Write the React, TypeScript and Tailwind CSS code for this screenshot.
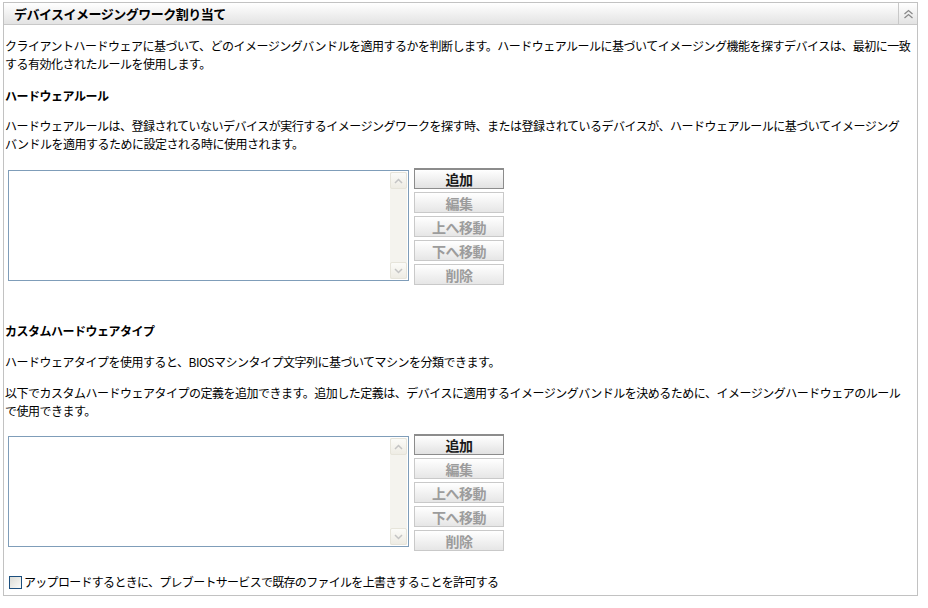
import React from "react";

const FONT = { fontFamily: "'Noto Sans CJK JP', 'Noto Sans', sans-serif" };

function ListBox() {
  return (
    <div className="mt-[2px] flex h-[111px] w-[401px] border border-[#7f9db9] bg-white">
      <div className="flex-1" />
      <div className="my-[1px] mr-[1px] flex w-[17px] flex-col bg-[#f4f3ee]">
        <div className="flex h-[17px] items-center justify-center rounded-[2px] border border-[#e6e4da] bg-linear-to-b from-[#fbfbf8] to-[#eeece4]">
          <svg width="9" height="6" viewBox="0 0 9 6">
            <polyline points="1,5 4.5,1.5 8,5" fill="none" stroke="#c4c4c4" strokeWidth="1.5" />
          </svg>
        </div>
        <div className="flex-1" />
        <div className="flex h-[17px] items-center justify-center rounded-[2px] border border-[#e6e4da] bg-linear-to-b from-[#fbfbf8] to-[#eeece4]">
          <svg width="9" height="6" viewBox="0 0 9 6">
            <polyline points="1,1 4.5,4.5 8,1" fill="none" stroke="#c4c4c4" strokeWidth="1.5" />
          </svg>
        </div>
      </div>
    </div>
  );
}

function Btn({ label, primary }: { label: string; primary?: boolean }) {
  return (
    <div
      className={
        primary
          ? "flex h-[21px] w-[90px] items-center justify-center border border-[#8c8c8c] border-t-2 bg-linear-to-b from-white to-[#e2e2e2] text-[14px] font-bold leading-none tracking-[-0.5px] text-[#1a1a1a]"
          : "flex h-[21px] w-[90px] items-center justify-center border border-[#c9c9c9] bg-linear-to-b from-white to-[#e6e6e6] text-[14px] font-bold leading-none tracking-[-0.5px] text-[#9c9c9c]"
      }
    >
      {label}
    </div>
  );
}

function ListEditor() {
  return (
    <div className="ml-[3px] flex items-start gap-[5px]">
      <ListBox />
      <div className="flex flex-col gap-[3px]">
        <Btn label="追加" primary />
        <Btn label="編集" />
        <Btn label="上へ移動" />
        <Btn label="下へ移動" />
        <Btn label="削除" />
      </div>
    </div>
  );
}

export default function App() {
  return (
    <div className="h-[608px] w-[928px] bg-white pt-[2px] text-[12px] text-black" style={FONT}>
      <div className="ml-[3px] h-[594px] w-[915px] border border-[#c2c2c2]">
        <div className="flex h-[22px] items-stretch border-b border-[#c8c8c8] bg-linear-to-b from-white to-[#e3e3e3]">
          <div className="flex flex-1 items-center pl-[10px] text-[13px] font-bold tracking-[-0.5px]">
            デバイスイメージングワーク割り当て
          </div>
          <div className="flex w-[19px] items-center justify-center border-l border-[#c8c8c8]">
            <svg width="11" height="10" viewBox="0 0 11 10">
              <polyline points="1.5,5 5.5,1.5 9.5,5" fill="none" stroke="#8a8a8a" strokeWidth="1.3" />
              <polyline points="1.5,9 5.5,5.5 9.5,9" fill="none" stroke="#8a8a8a" strokeWidth="1.3" />
            </svg>
          </div>
        </div>

        <div className="pl-[1px] leading-[18px] tracking-[-0.5px]">
          <p className="mt-[12px] whitespace-nowrap">
            クライアントハードウェアに基づいて、どのイメージングバンドルを適用するかを判断します。ハードウェアルールに基づいてイメージング機能を探すデバイスは、最初に一致
            <br />
            する有効化されたルールを使用します。
          </p>
          <p className="mt-[14px] font-bold">ハードウェアルール</p>
          <p className="mt-[12px] whitespace-nowrap">
            ハードウェアルールは、登録されていないデバイスが実行するイメージングワークを探す時、または登録されているデバイスが、ハードウェアルールに基づいてイメージング
            <br />
            バンドルを適用するために設定される時に使用されます。
          </p>
          <div className="mt-[15px]">
            <ListEditor />
          </div>
          <p className="mt-[37px] font-bold">カスタムハードウェアタイプ</p>
          <p className="mt-[13px] whitespace-nowrap">
            ハードウェアタイプを使用すると、BIOSマシンタイプ文字列に基づいてマシンを分類できます。
          </p>
          <p className="mt-[13px] whitespace-nowrap">
            以下でカスタムハードウェアタイプの定義を追加できます。追加した定義は、デバイスに適用するイメージングバンドルを決めるために、イメージングハードウェアのルール
            <br />
            で使用できます。
          </p>
          <div className="mt-[14px]">
            <ListEditor />
          </div>
          <div className="mt-[22px] flex items-center gap-[2px] pl-[4px]">
            <div className="h-[13px] w-[13px] border border-[#1c4f7e] bg-linear-to-br from-[#dcdcd6] to-[#fbfbf8]" />
            <span className="tracking-[-0.7px]">アップロードするときに、プレブートサービスで既存のファイルを上書きすることを許可する</span>
          </div>
        </div>
      </div>
    </div>
  );
}
